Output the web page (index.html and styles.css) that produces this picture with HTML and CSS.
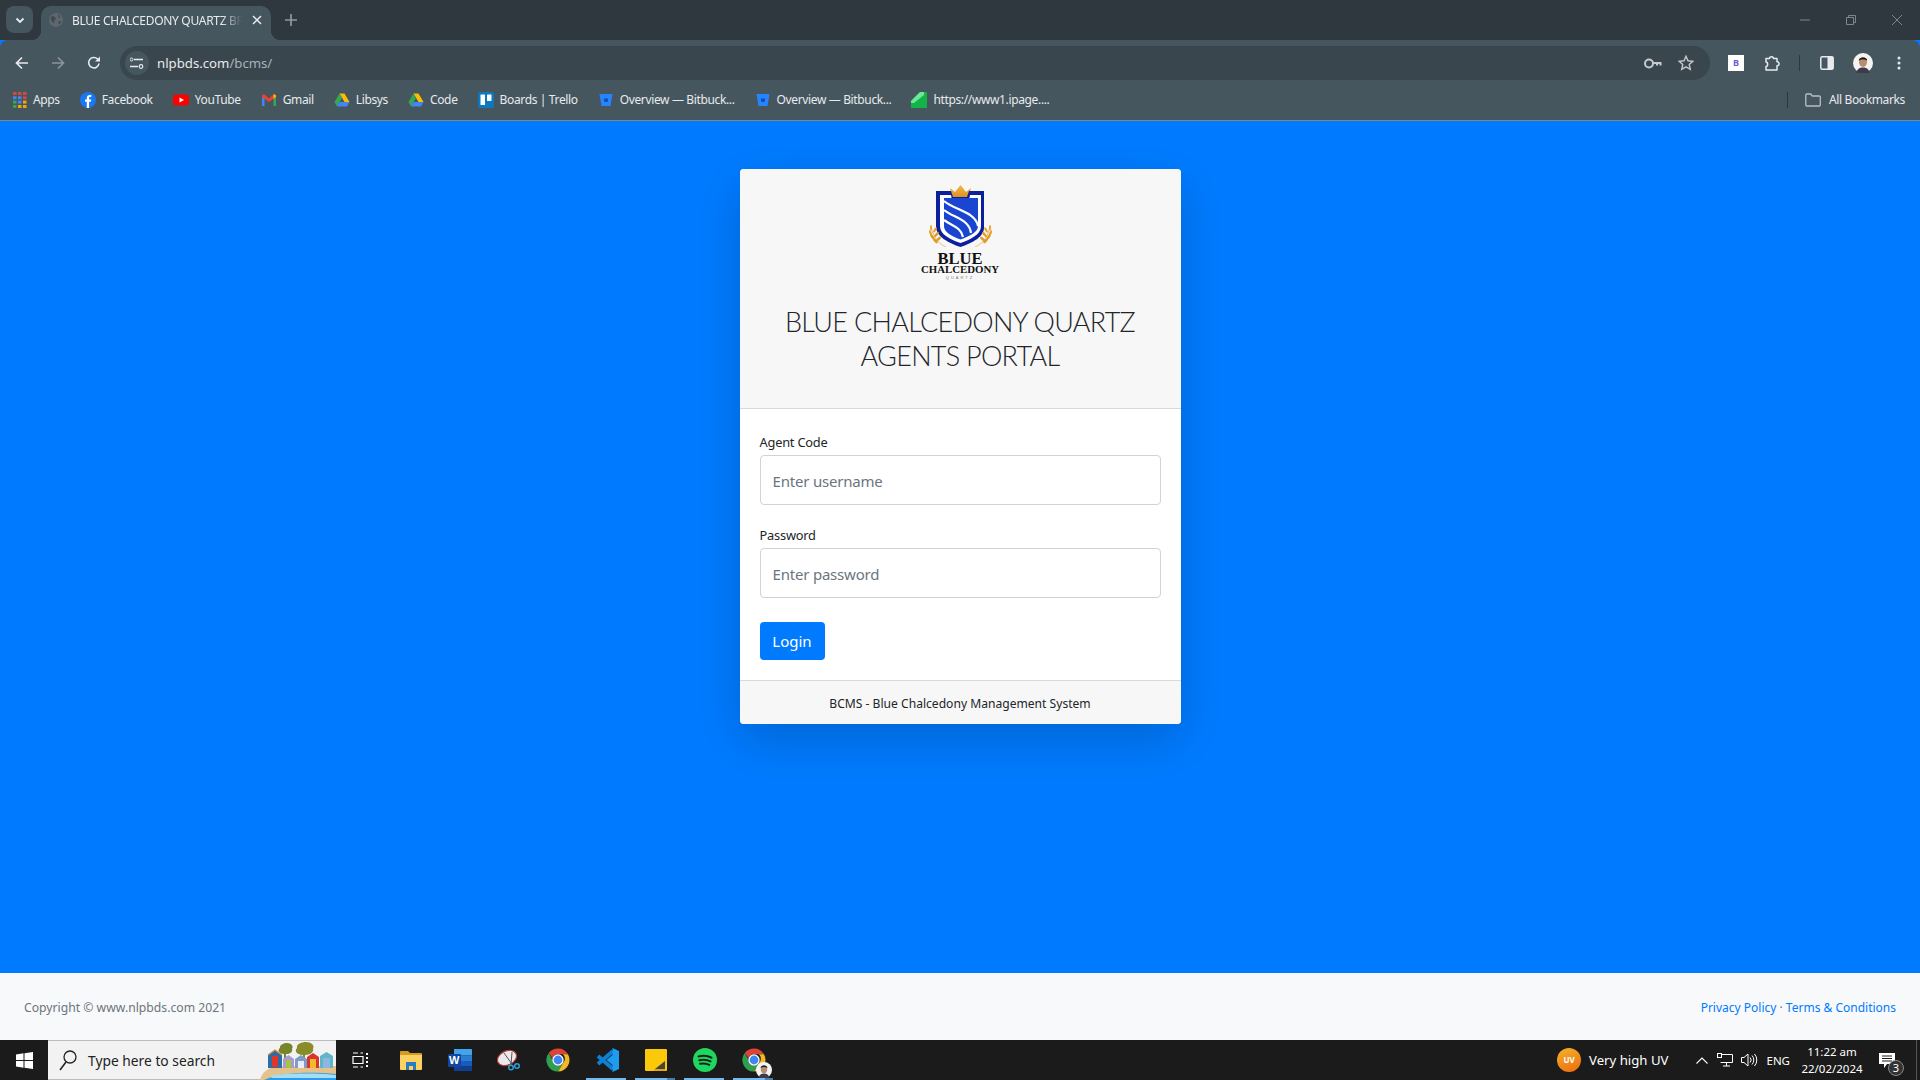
FILE: index.html
```html
<!DOCTYPE html>
<html lang="en">
<head>
    <meta charset="UTF-8">
    <meta name="viewport" content="width=device-width, initial-scale=1.0">
    <title>BLUE CHALCEDONY QUARTZ BI</title>
    <link rel="stylesheet" href="styles.css">
</head>
<body>
    <svg class="defs" width="0" height="0">
        <symbol id="drive" viewBox="0 0 16 16">
            <path d="M5.500 1.500h5L15.500 10h-5z" fill="#fbbc04"/>
            <path d="M5.500 1.500L.5 10 3 14.500 8 6z" fill="#34a853"/>
            <path d="M3 14.500h10L15.500 10h-10z" fill="#4285f4"/>
        </symbol>
        <symbol id="bitbucket" viewBox="0 0 16 16">
            <path d="M1.500 2h13l-2 12h-9z" fill="#2684ff"/>
            <path d="M5.800 6.500h4.400l-.6 3.600H6.400z" fill="#0b4fb8"/>
        </symbol>
        <symbol id="chrome" viewBox="0 0 24 24">
            <path d="M12 .5a11.500 11.500 0 0 1 10 5.800H12a5.700 5.700 0 0 0-5.500 4L2.700 5.100A11.500 11.500 0 0 1 12 .5z" fill="#db4437"/>
            <path d="M22 6.300A11.500 11.500 0 0 1 12 23.500l4.900-8.500a5.700 5.700 0 0 0 0-8.700z" fill="#f2b824"/>
            <path d="M2.700 5.100A11.500 11.500 0 0 0 12 23.500l4.900-8.500a5.700 5.700 0 0 1-10.400-3z" fill="#2f9e4f"/>
            <circle cx="12" cy="12" r="5.700" fill="#fff"/>
            <circle cx="12" cy="12" r="4.400" fill="#4285f4"/>
        </symbol>
        <symbol id="avatar" viewBox="0 0 20 20">
            <circle cx="10" cy="10" r="10" fill="#f4f4f2"/>
            <path d="M3.500 20c.5-4 3-5.500 6.500-5.500s6 1.500 6.500 5.500z" fill="#3d3a4c"/>
            <ellipse cx="10" cy="9" rx="4" ry="5" fill="#b98d6f"/>
            <path d="M5.800 7.500C5.500 3.500 14.500 3.500 14.200 7.500 12 6 8 6 5.800 7.500z" fill="#1e1f1c"/>
        </symbol>
        <symbol id="wheat" viewBox="0 0 18 22">
            <path d="M17 22C8 18 3 10 2 0" fill="none" stroke="#e6a93f" stroke-width=".7"/>
            <ellipse cx="2" cy="3" rx="1" ry="3" fill="#e8a430"/>
            <ellipse cx="6" cy="5" rx="1.200" ry="3" fill="#e8a430" transform="rotate(30 6 5)"/>
            <ellipse cx="1.500" cy="8" rx="1.200" ry="3" fill="#e8a430" transform="rotate(-25 1.500 8)"/>
            <ellipse cx="7.500" cy="9.500" rx="1.300" ry="3.200" fill="#e39a22" transform="rotate(40 7.500 9.500)"/>
            <ellipse cx="3.500" cy="12" rx="1.300" ry="3.200" fill="#e39a22" transform="rotate(-35 3.500 12)"/>
            <ellipse cx="9.500" cy="14" rx="1.300" ry="3" fill="#e39a22" transform="rotate(50 9.500 14)"/>
            <ellipse cx="6.500" cy="16" rx="1.300" ry="3" fill="#e39a22" transform="rotate(-45 6.500 16)"/>
        </symbol>
    </svg>

    <!-- tab strip -->
    <div class="tabstrip">
        <div class="tab-search">
            <svg width="12" height="12" viewBox="0 0 12 12"><path d="M2.500 4.500L6 8l3.500-3.500" fill="none" stroke="#e8eaed" stroke-width="1.800"/></svg>
        </div>
        <div class="tab">
            <svg class="tab-fav" width="14" height="14" viewBox="0 0 14 14"><circle cx="7" cy="7" r="7" fill="#5d676d"/><path d="M3 2.500l3 1.500 1 2.500-2 1 .5 3-2-1.500L1.500 6zM9 1l2.500 3-2 1zM9.500 8l3 .5-2.500 3.500z" fill="#3f4b52"/></svg>
            <span class="tab-title">BLUE CHALCEDONY QUARTZ BF</span>
            <svg class="tab-close" width="10" height="10" viewBox="0 0 10 10"><path d="M1 1l8 8M9 1L1 9" stroke="#e8eaed" stroke-width="1.500"/></svg>
        </div>
        <svg class="tab-new" width="12" height="12" viewBox="0 0 12 12"><path d="M6 0v12M0 6h12" stroke="#8f999e" stroke-width="1.700"/></svg>
        <div class="win-controls">
            <svg width="10" height="10" viewBox="0 0 10 10"><path d="M0 5h10" stroke="#7c878d"/></svg>
            <svg width="10" height="10" viewBox="0 0 10 10"><path d="M.5 2.500h7v7h-7zM2.500 2.500v-2h7v7h-2" fill="none" stroke="#7c878d"/></svg>
            <svg width="10" height="10" viewBox="0 0 10 10"><path d="M0 0l10 10M10 0L0 10" stroke="#7c878d"/></svg>
        </div>
    </div>

    <!-- toolbar -->
    <div class="toolbar">
        <div class="nav-btn"><svg width="14" height="14" viewBox="0 0 14 14"><path d="M13 7H2M7 1.500L1.500 7 7 12.500" fill="none" stroke="#e8eaed" stroke-width="1.700"/></svg></div>
        <div class="nav-btn"><svg width="14" height="14" viewBox="0 0 14 14"><path d="M1 7h11M7 1.500L12.500 7 7 12.500" fill="none" stroke="#8a949a" stroke-width="1.700"/></svg></div>
        <div class="nav-btn"><svg width="14" height="14" viewBox="0 0 14 14"><path d="M12 7.500A5.200 5.200 0 1 1 10.500 3L12.500 5" fill="none" stroke="#e8eaed" stroke-width="1.600"/><path d="M13 .5v5H8z" fill="#e8eaed"/></svg></div>
        <div class="omnibox">
            <div class="site-btn">
                <svg width="14" height="12" viewBox="0 0 14 12"><path d="M4 2.500h9M0 9.500h8" stroke="#e8eaed" stroke-width="1.500"/><circle cx="1.500" cy="2.500" r="1.500" fill="none" stroke="#e8eaed"/><circle cx="11" cy="9.500" r="1.800" fill="none" stroke="#e8eaed" stroke-width="1.200"/></svg>
            </div>
            <span class="url">nlpbds.com<span class="url-path">/bcms/</span></span>
            <svg class="omni-key" width="18" height="11" viewBox="0 0 18 11"><circle cx="5" cy="5.500" r="4" fill="none" stroke="#c4cace" stroke-width="2"/><path d="M8.500 4h9v3.500h-2V6h-1.500v1.500h-2V6h-3.500z" fill="#c4cace"/></svg>
            <svg class="omni-star" width="16" height="16" viewBox="0 0 16 16"><path d="M8 1.300l2 4.500 4.900.5-3.700 3.200 1.100 4.800L8 11.800l-4.300 2.500 1.100-4.800L1.100 6.300 6 5.800z" fill="none" stroke="#c4cace" stroke-width="1.400"/></svg>
        </div>
        <div class="tool-icons">
            <div class="ext-b">B</div>
            <svg class="tool-puzzle" width="16" height="16" viewBox="0 0 16 16"><path d="M1 3.500h3.500C4.500 1 8.500 1 8.500 3.500H12v3.300c2.800 0 2.800 4 0 4V15H1v-3.500c2.200 0 2.200-4.500 0-4.500z" fill="none" stroke="#e8eaed" stroke-width="1.500" stroke-linejoin="round"/></svg>
            <span class="tool-divider"></span>
            <svg class="tool-panel" width="14" height="14" viewBox="0 0 14 14"><rect x=".8" y=".8" width="12.400" height="12.400" rx="1.500" fill="none" stroke="#e8eaed" stroke-width="1.500"/><rect x="7.500" y="1" width="5.500" height="12" fill="#e8eaed"/></svg>
            <svg class="tool-avatar" width="20" height="20"><use href="#avatar"/></svg>
            <svg class="tool-menu" width="4" height="14" viewBox="0 0 4 14"><circle cx="2" cy="2" r="1.500" fill="#e8eaed"/><circle cx="2" cy="7" r="1.500" fill="#e8eaed"/><circle cx="2" cy="12" r="1.500" fill="#e8eaed"/></svg>
        </div>
    </div>

    <!-- bookmarks -->
    <div class="bookmarks">
        <div class="bm">
            <svg width="14" height="16" viewBox="0 0 14 16"><path d="M0 0h3.500v3H0zM5 0h3.500v3H5zM10 0h3.500v3H10z" fill="#d9463b"/><path d="M0 4.300h3.500v3H0zM5 4.300h3.500v3H5z" fill="#4285f4"/><path d="M10 4.300h3.500v3H10z" fill="#d9463b"/><path d="M0 8.600h3.500v3H0z" fill="#34a853"/><path d="M5 8.600h3.500v3H5z" fill="#4285f4"/><path d="M10 8.600h3.500v3H10z" fill="#f2a60d"/><path d="M0 12.900h3.500v3H0z" fill="#34a853"/><path d="M5 12.900h3.500v3H5zM10 12.900h3.500v3H10z" fill="#f2a60d"/></svg>
            <span>Apps</span>
        </div>
        <div class="bm">
            <svg width="16" height="16" viewBox="0 0 16 16"><circle cx="8" cy="8" r="8" fill="#1877f2"/><path d="M6.800 16V9.800H5V7.500h1.800V6c0-2 1.200-3 3-3 .8 0 1.500.1 1.500.1v2h-1c-1 0-1.200.5-1.200 1.100v1.300h2.200l-.4 2.300H9.100V16z" fill="#fff"/></svg>
            <span>Facebook</span>
        </div>
        <div class="bm">
            <svg width="16" height="16" viewBox="0 0 16 16"><rect y="2.500" width="16" height="11" rx="3" fill="#f00"/><path d="M6.500 5.500L11 8l-4.500 2.500z" fill="#fff"/></svg>
            <span>YouTube</span>
        </div>
        <div class="bm">
            <svg width="16" height="16" viewBox="0 0 16 16"><path d="M1 14V4l2.500 0V14z" fill="#4285f4"/><path d="M12.500 14V4H15V14z" fill="#34a853"/><path d="M1 3.500L3 2 8 6.500 13 2l2 1.500V5L8 10 1 5z" fill="#ea4335"/><path d="M13 2l2 1.500V5l-2.500 1.800V3z" fill="#fbbc04"/></svg>
            <span>Gmail</span>
        </div>
        <div class="bm">
            <svg width="16" height="16"><use href="#drive"/></svg>
            <span>Libsys</span>
        </div>
        <div class="bm">
            <svg width="16" height="16"><use href="#drive"/></svg>
            <span>Code</span>
        </div>
        <div class="bm">
            <svg width="16" height="16" viewBox="0 0 16 16"><rect width="16" height="16" rx="2" fill="#0c79bf"/><rect x="2.500" y="2.500" width="4.500" height="10.500" rx=".5" fill="#fff"/><rect x="9" y="2.500" width="4.500" height="6.500" rx=".5" fill="#fff"/></svg>
            <span>Boards | Trello</span>
        </div>
        <div class="bm">
            <svg width="16" height="16"><use href="#bitbucket"/></svg>
            <span>Overview — Bitbuck...</span>
        </div>
        <div class="bm">
            <svg width="16" height="16"><use href="#bitbucket"/></svg>
            <span>Overview — Bitbuck...</span>
        </div>
        <div class="bm">
            <svg width="16" height="16" viewBox="0 0 16 16"><path d="M9 0h6a1 1 0 0 1 1 1v14a1 1 0 0 1-1 1H1a1 1 0 0 1-1-1V9z" fill="#12b347"/><path d="M9 0h4v3L3 11H0V9z" fill="#6fe598"/></svg>
            <span>https://www1.ipage....</span>
        </div>
        <div class="bm-all">
            <span class="bm-divider"></span>
            <svg width="16" height="14" viewBox="0 0 16 14"><path d="M.8 2A1 1 0 0 1 1.800 1h4l1.500 2h7a1 1 0 0 1 1 1v8a1 1 0 0 1-1 1H1.800a1 1 0 0 1-1-1z" fill="none" stroke="#b7bfc4" stroke-width="1.300"/></svg>
            <span>All Bookmarks</span>
        </div>
    </div>

    <!-- page -->
    <div class="page">
        <div class="card">
            <div class="card-header">
                <svg class="logo" width="80" height="98" viewBox="0 0 80 98">
                    <defs>
                        <linearGradient id="gold" x1="0" y1="0" x2="0" y2="1"><stop offset="0" stop-color="#f3b54a"/><stop offset="1" stop-color="#de8f1e"/></linearGradient>
                    </defs>
                    <path d="M30 4l5 4 5.500-7L46 8l5-4-2.500 10h-16z" fill="url(#gold)"/>
                    <path d="M16 7h15l2 6h14l2-6h15v35C65 53 52 59 40.500 63 29 59 16 53 16 42z" fill="#0c1f9c"/>
                    <path d="M20 11h11l1 5h17l1-5h11v31C61 51 50 55.500 40.500 59 31 55.500 20 51 20 42z" fill="#fff"/>
                    <path d="M24 14h34v28C58 48 50 52 40.500 55.500 31 52 24 48 24 42z" fill="#1a45d0"/>
                    <path d="M24 17c10 9 32 11 34 25M24 26c10 8 25 9 27 23M24 36c8 6 17 7 19 17" fill="none" stroke="#fff" stroke-width="2.200"/>
                    <svg x="9" y="41" width="18" height="22"><use href="#wheat"/></svg>
                    <g transform="translate(72 41) scale(-1 1)"><svg width="18" height="22"><use href="#wheat"/></svg></g>
                    <text class="logo-blue" x="40" y="80" text-anchor="middle">BLUE</text>
                    <text class="logo-name" x="40" y="89" text-anchor="middle">CHALCEDONY</text>
                    <text class="logo-sub" x="40" y="95" text-anchor="middle">QUARTZ</text>
                </svg>
                <h1>BLUE CHALCEDONY QUARTZ<br>AGENTS PORTAL</h1>
            </div>
            <div class="card-body">
                <div class="form-group">
                    <label for="code">Agent Code</label>
                    <input id="code" type="text" placeholder="Enter username">
                </div>
                <div class="form-group">
                    <label for="pass">Password</label>
                    <input id="pass" type="password" placeholder="Enter password">
                </div>
                <button class="btn-login">Login</button>
            </div>
            <div class="card-footer">BCMS - Blue Chalcedony Management System</div>
        </div>
    </div>

    <div class="site-footer">
        <span class="copy">Copyright © www.nlpbds.com 2021</span>
        <span class="links"><a href="#">Privacy Policy</a> · <a href="#">Terms &amp; Conditions</a></span>
    </div>

    <!-- windows taskbar -->
    <div class="taskbar">
        <div class="start">
            <svg width="17" height="17" viewBox="0 0 17 17"><path d="M0 2.500L7.500 1.300V8H0zM8.500 1.200L17 0v8H8.500zM0 9h7.500v6.700L0 14.500zM8.500 9H17v8l-8.500-1.200z" fill="#fff"/></svg>
        </div>
        <div class="search">
            <svg class="search-icon" width="20" height="24" viewBox="0 0 20 24"><circle cx="12" cy="9" r="6" fill="none" stroke="#222" stroke-width="1.300"/><path d="M8 14L2 22" stroke="#222" stroke-width="1.500"/></svg>
            <span class="search-text">Type here to search</span>
            <svg class="search-art" width="76" height="40" viewBox="0 0 76 40">
                <path d="M0 40c2-8 8-13 20-14h56v14z" fill="#e5c28c"/>
                <path d="M4 40c12-7 44-9 72-6v6z" fill="#2f9be6"/>
                <path d="M10 36c16-3 44-3 66-1v3H12z" fill="#a4def5"/>
                <path d="M24 14c-5 0-7-4-4-6-1-3 4-5 7-5 4 0 7 3 5 6 1 3-2 5-6 5v7h-2z" fill="#76852c"/>
                <path d="M43 15c-6 0-9-4-6-7-1-4 5-6 9-6 5 0 9 3 7 7 1 3-3 6-8 6v7h-2z" fill="#8a8c2a"/>
                <path d="M8 15l7-5 7 5v13H8z" fill="#2b6ea6"/><path d="M8 15l7-5 7 5" fill="none" stroke="#e8893b" stroke-width="1.200"/><rect x="12" y="16" width="6" height="11" fill="#e2352a"/>
                <path d="M23 19l5.500-4 5.500 4v9H23z" fill="#a99ad0"/><rect x="26" y="20" width="5" height="8" fill="#a8c63c"/>
                <path d="M35 19l6-4 6 4v9H35z" fill="#7f9cc8"/><rect x="38" y="21" width="6" height="7" fill="#e8f0f6"/>
                <path d="M47 17l6-4 6 4v11H47z" fill="#d8352e"/><rect x="50" y="19" width="6" height="9" fill="#f3b82c"/>
                <path d="M60 16l6.500-4 6.500 4v12H60z" fill="#5fb6c8"/><rect x="63" y="18" width="7" height="10" fill="#8fb6dc"/>
            </svg>
        </div>
        <div class="task-btn">
            <svg width="16" height="16" viewBox="0 0 16 16"><path d="M1 4.500h10v7H1zM1 1h5M8.500 1H11M1 15h5M8.500 15H11" fill="none" stroke="#fff" stroke-width="1.200"/><path d="M14 1h2v2h-2zM14 5h2v2h-2zM14 9h2v2h-2zM14 13h2v2h-2z" fill="#fff"/></svg>
        </div>
        <div class="apps">
            <div class="app">
                <svg width="22" height="19" viewBox="0 0 22 19"><path d="M0 1a1 1 0 0 1 1-1h7l2 2h11a1 1 0 0 1 1 1v3H0z" fill="#d79a22"/><path d="M0 4h22v14a1 1 0 0 1-1 1H1a1 1 0 0 1-1-1z" fill="#fbd262"/><path d="M6 11h10v8h-3v-4H9v4H6z" fill="#2a7bc6"/></svg>
            </div>
            <div class="app">
                <svg width="24" height="22" viewBox="0 0 24 22"><path d="M6 0h17a1 1 0 0 1 1 1v5.500H6z" fill="#41a5ee"/><rect x="6" y="6.500" width="18" height="5.500" fill="#2b7cd3"/><rect x="6" y="12" width="18" height="5.500" fill="#185abd"/><path d="M6 17.500h18V21a1 1 0 0 1-1 1H6z" fill="#103f91"/><rect x="0" y="5" width="13" height="13" rx="1" fill="#11459e"/></svg>
                <span class="word-w">W</span>
            </div>
            <div class="app">
                <svg width="24" height="22" viewBox="0 0 24 22"><ellipse cx="10" cy="9" rx="10" ry="7" transform="rotate(-25 10 9)" fill="#eceaec" stroke="#b53a3a" stroke-width="1.200"/><path d="M7 4l8 11M15 3l-1 13" stroke="#555"/><circle cx="14" cy="18.500" r="2.300" fill="none" stroke="#2f9fd8" stroke-width="1.500"/><circle cx="20" cy="17" r="2.300" fill="none" stroke="#2f9fd8" stroke-width="1.500"/></svg>
            </div>
            <div class="app"><svg width="24" height="24"><use href="#chrome"/></svg></div>
            <div class="app active">
                <svg width="24" height="24" viewBox="0 0 24 24"><path d="M18 3L3 16M3 8l15 13" fill="none" stroke="#0e7fd2" stroke-width="4"/><path d="M17.500 0L24 3v18l-6.500 3V17l-6-5 6-5z" fill="#1f9cf0"/></svg>
            </div>
            <div class="app active stacked">
                <svg width="22" height="22" viewBox="0 0 22 22"><path d="M0 1a1 1 0 0 1 1-1h20a1 1 0 0 1 1 1v20a1 1 0 0 1-1 1H1a1 1 0 0 1-1-1z" fill="#fcc80a"/><path d="M20 12v8H10z" fill="#444"/><path d="M10 20h10v2H8z" fill="#e6a50c"/></svg>
            </div>
            <div class="app active">
                <svg width="24" height="24" viewBox="0 0 24 24"><circle cx="12" cy="12" r="12" fill="#1ed760"/><path d="M5.500 8.500c4.500-1.200 9-1 13 1.200M6.300 12.300c4-1 7.800-.7 11.200 1.100M7 15.800c3.300-.7 6.500-.5 9.300 1" fill="none" stroke="#14241a" stroke-width="2" stroke-linecap="round"/></svg>
            </div>
            <div class="app active stacked">
                <svg width="24" height="24"><use href="#chrome"/></svg>
                <svg class="app-face" width="16" height="16"><use href="#avatar"/></svg>
            </div>
        </div>
        <div class="tray">
            <div class="weather">
                <span class="uv">UV</span>
                <span>Very high UV</span>
            </div>
            <svg class="tray-up" width="12" height="7" viewBox="0 0 12 7"><path d="M.5 6.500L6 1l5.500 5.500" fill="none" stroke="#fff" stroke-width="1.100"/></svg>
            <svg class="tray-net" width="16" height="14" viewBox="0 0 16 14"><path d="M3.500 1.500h12v8h-12M3.500 1.500M6 13h7M9.500 9.500V13" fill="none" stroke="#fff"/><rect x=".5" y=".5" width="4" height="4" fill="#1b1b1b" stroke="#fff"/></svg>
            <svg class="tray-vol" width="17" height="14" viewBox="0 0 17 14"><path d="M.5 4.500h2.500L7 1v12L3 9.500H.5z" fill="none" stroke="#fff"/><path d="M9 4.500a3.500 3.500 0 0 1 0 5M11 2.500a6.500 6.500 0 0 1 0 9M13.500 1a9 9 0 0 1 0 12" fill="none" stroke="#fff"/></svg>
            <span class="tray-lang">ENG</span>
            <div class="clock"><span>11:22 am</span><span>22/02/2024</span></div>
            <div class="notify">
                <svg width="16" height="15" viewBox="0 0 16 15"><path d="M0 0h16v11H8l-3 4v-4H0z" fill="#fff"/><path d="M3 3h10M3 5.500h10M3 8h10" stroke="#1b1b1b"/></svg>
                <span class="notify-count">3</span>
            </div>
            <span class="show-desktop"></span>
        </div>
    </div>
</body>
</html>
```

FILE: styles.css
```css
*{
    box-sizing: border-box;
}
html,body{
    height: 100%;
}
body{
    margin: 0;
    display: flex;
    flex-direction: column;
    height: 1080px;
    overflow: hidden;
    font-family: "Noto Sans", "Open Sans", "Liberation Sans", sans-serif;
    color: #212529;
    background: #007bff;
}
.defs{
    position: absolute;
}

/* tab strip */
.tabstrip{
    height: 40px;
    flex: none;
    display: flex;
    align-items: flex-end;
    background: #2e383e;
}
.tab-search{
    width: 27px;
    height: 27px;
    margin: 0 8px 7px 6px;
    border-radius: 8px;
    background: #46565f;
    display: flex;
    align-items: center;
    justify-content: center;
}
.tab{
    position: relative;
    width: 230px;
    height: 34px;
    border-radius: 10px 10px 0 0;
    background: #46565f;
    display: flex;
    align-items: center;
    padding: 0 10px 6px 8px;
    color: #e8eaed;
    font-size: 12px;
    letter-spacing: -0.3px;
}
/* the curved feet of the active tab */
.tab::before,.tab::after{
    content: "";
    position: absolute;
    bottom: 0;
    width: 10px;
    height: 10px;
}
.tab::before{
    left: -10px;
    background: radial-gradient(circle at 0 0, transparent 10px, #46565f 10.500px);
}
.tab::after{
    right: -10px;
    background: radial-gradient(circle at 100% 0, transparent 10px, #46565f 10.500px);
}
.tab-fav{
    flex: none;
}
.tab-title{
    width: 170px;
    margin-left: 9px;
    white-space: nowrap;
    -webkit-mask-image: linear-gradient(to right, #000 88%, transparent);
    mask-image: linear-gradient(to right, #000 88%, transparent);
}
.tab-close{
    margin-left: 10px;
    flex: none;
}
.tab-new{
    margin: 0 0 14px 14px;
}
.win-controls{
    margin-left: auto;
    display: flex;
    gap: 36px;
    padding: 0 18px 15px 0;
}

/* toolbar */
.toolbar{
    height: 40px;
    flex: none;
    display: flex;
    align-items: flex-end;
    padding-left: 4px;
    background: #46565f;
    border-radius: 8px 8px 0 0;
}
.nav-btn{
    width: 36px;
    height: 34px;
    display: flex;
    align-items: center;
    justify-content: center;
}
.omnibox{
    width: 1590px;
    height: 34px;
    margin-left: 8px;
    border-radius: 17px;
    background: #3a464e;
    display: flex;
    align-items: center;
    padding-left: 5px;
}
.site-btn{
    width: 24px;
    height: 24px;
    border-radius: 50%;
    background: #46565f;
    display: flex;
    align-items: center;
    justify-content: center;
}
.url{
    margin-left: 8px;
    color: #e8eaed;
    font-size: 13.200px;
}
.url-path{
    color: #a9b2b7;
}
.omni-key{
    margin-left: auto;
}
.omni-star{
    margin: 0 16px 0 16px;
}
.tool-icons{
    flex: 1;
    height: 34px;
    display: flex;
    align-items: center;
}
.ext-b{
    width: 16px;
    height: 16px;
    margin-left: 18px;
    background: #fff;
    color: #6a5fd0;
    font-size: 9px;
    font-weight: 700;
    text-align: center;
    line-height: 16px;
}
.tool-puzzle{
    margin-left: 21px;
}
.tool-divider{
    width: 1px;
    height: 16px;
    margin-left: 18px;
    background: #2e383e;
}
.tool-panel{
    margin-left: 20px;
}
.tool-avatar{
    margin-left: 19px;
}
.tool-menu{
    margin-left: 24px;
}

/* bookmarks */
.bookmarks{
    height: 41px;
    flex: none;
    display: flex;
    align-items: center;
    gap: 20px;
    padding: 0 15px 1px 13px;
    background: #46565f;
    border-bottom: 1px solid #7c878d;
    color: #e8eaed;
    font-size: 12px;
    letter-spacing: -0.36px;
}
.bm{
    display: flex;
    align-items: center;
    gap: 6px;
    white-space: nowrap;
}
.bm-all{
    margin-left: auto;
    display: flex;
    align-items: center;
}
.bm-divider{
    width: 1px;
    height: 16px;
    margin-right: 17px;
    background: #2e383e;
}
.bm-all span:last-child{
    margin-left: 8px;
}

/* page */
.page{
    flex: 1;
    padding-top: 48px;
    background: #007bff;
}
.card{
    width: 441px;
    margin: 0 auto;
    background: #fff;
    border-radius: 4px;
    box-shadow: 0 16px 48px rgba(0,0,0,.175);
}
.card-header{
    height: 240px;
    padding-top: 15px;
    background: #f7f7f7;
    border-bottom: 1px solid #d9d9d9;
    border-radius: 4px 4px 0 0;
    text-align: center;
}
.logo{
    display: block;
    margin: 0 auto;
}
.logo-blue{
    font: 700 16.500px "Liberation Serif", serif;
    fill: #111;
}
.logo-name{
    font: 700 10.800px "Liberation Serif", serif;
    fill: #111;
}
.logo-sub{
    font: 400 4px "Liberation Sans", sans-serif;
    letter-spacing: 2px;
    fill: #777;
}
.card-header h1{
    margin: 23px 0 0;
    font-family: Lato, "Noto Sans", sans-serif;
    font-size: 27px;
    font-weight: 300;
    letter-spacing: -0.7px;
    line-height: 34px;
    color: #212529;
}
.card-body{
    padding: 23px 20px 20px;
}
.form-group{
    margin-bottom: 20px;
}
.form-group label{
    display: block;
    height: 21px;
    margin-bottom: 2px;
    font-size: 12.800px;
    letter-spacing: -0.2px;
    line-height: 20px;
}
.form-group input{
    display: block;
    width: 100%;
    height: 50px;
    padding: 1px 12px 0;
    border: 1px solid #ced4da;
    border-radius: 4px;
    font: inherit;
    font-size: 15px;
    letter-spacing: -0.2px;
    color: #495057;
    outline: none;
}
.form-group input::placeholder{
    color: #6c757d;
    opacity: 1;
}
.btn-login{
    display: block;
    width: 65px;
    height: 38px;
    margin-top: 24px;
    padding: 0;
    border: 0;
    border-radius: 4px;
    background: #007bff;
    color: #fff;
    font: inherit;
    font-size: 15px;
}
.card-footer{
    height: 44px;
    padding-top: 1px;
    border-top: 1px solid #d9d9d9;
    border-radius: 0 0 4px 4px;
    background: #f7f7f7;
    display: flex;
    align-items: center;
    justify-content: center;
    font-size: 12.100px;
}

/* footer */
.site-footer{
    height: 67px;
    flex: none;
    display: flex;
    align-items: center;
    justify-content: space-between;
    padding: 1px 24px 0;
    background: #f8f9fa;
    font-size: 12.200px;
    color: #6c757d;
}
.links{
    font-size: 12px;
}
.site-footer a{
    color: #007bff;
    text-decoration: none;
}

/* taskbar */
.taskbar{
    height: 40px;
    flex: none;
    display: flex;
    background: #1b1b1b;
    color: #fff;
}
.start{
    width: 48px;
    display: flex;
    align-items: center;
    justify-content: center;
}
.search{
    width: 288px;
    position: relative;
    display: flex;
    align-items: center;
    padding-left: 10px;
    background: #f2f2f2;
    border: 1px solid #bdbdbd;
    border-width: 1px 0;
    color: #222;
    font-size: 13.800px;
}
.search-text{
    margin-left: 10px;
}
.search-art{
    position: absolute;
    right: 0;
    bottom: -1px;
}
.task-btn{
    width: 48px;
    display: flex;
    align-items: center;
    justify-content: center;
}
.apps{
    display: flex;
    margin-left: 2px;
}
.app{
    width: 49px;
    position: relative;
    display: flex;
    align-items: center;
    justify-content: center;
}
.app.active::after{
    content: "";
    position: absolute;
    left: 4px;
    right: 5px;
    bottom: 0;
    height: 2px;
    background: #76b9ed;
}
.app.stacked::after{
    background: linear-gradient(to right, #76b9ed 80%, #4c7fa6 80%);
}
.word-w{
    position: absolute;
    left: 14px;
    top: 14px;
    font-family: "Liberation Sans", sans-serif;
    font-size: 11px;
    font-weight: 700;
    color: #fff;
}
.app-face{
    position: absolute;
    right: 6px;
    bottom: 2px;
}
.tray{
    margin-left: auto;
    display: flex;
    align-items: center;
    font-size: 11.500px;
}
.weather{
    display: flex;
    align-items: center;
    gap: 8px;
    font-size: 13.200px;
}
.uv{
    width: 24px;
    height: 24px;
    border-radius: 50%;
    background: linear-gradient(160deg, #f2b32c, #ee6a0c);
    font-size: 8px;
    font-weight: 700;
    line-height: 24px;
    text-align: center;
}
.tray-up{
    margin-left: 28px;
}
.tray-net{
    margin-left: 9px;
}
.tray-vol{
    margin-left: 8px;
}
.tray-lang{
    margin-left: 8px;
}
.clock{
    width: 80px;
    margin-left: 2px;
    display: flex;
    flex-direction: column;
    align-items: center;
    gap: 1px;
    line-height: 16px;
}
.notify{
    width: 44px;
    height: 40px;
    position: relative;
    display: flex;
    align-items: center;
    padding-left: 7px;
}
.notify-count{
    position: absolute;
    left: 16px;
    top: 20px;
    width: 16px;
    height: 16px;
    border: 1px solid #888;
    border-radius: 50%;
    background: #333;
    font-size: 11px;
    line-height: 14px;
    text-align: center;
}
.show-desktop{
    width: 4px;
    height: 40px;
    border-left: 1px solid #555;
}
```
